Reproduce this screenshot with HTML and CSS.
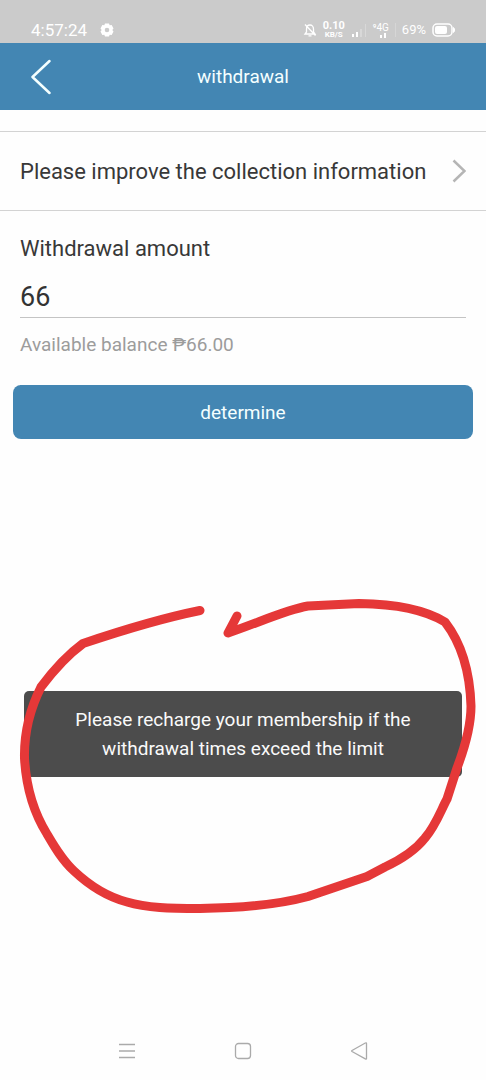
FILE: index.html
```html
<!DOCTYPE html>
<html lang="en">
<head>
<meta charset="utf-8">
<meta name="viewport" content="width=device-width, initial-scale=1">
<title>withdrawal</title>
<link rel="stylesheet" href="styles.css">
</head>
<body>
<div class="screen">
  <div class="status">
    <div class="status-left">
      <span class="clock">4:57:24</span>
      <svg class="gear" width="14" height="14" viewBox="0 0 14 14" aria-hidden="true"><path fill="currentColor" fill-rule="evenodd" d="M5 0.5h4l.7 1.8 2-.2 1.8 3.4L12.300 7l1.200 1.500-1.800 3.400-2-.2-.7 1.800H5l-.7-1.800-2 .2L.5 8.500 1.700 7 .5 5.500l1.800-3.400 2 .2zM7 4.700a2.300 2.300 0 1 0 0 4.600 2.300 2.300 0 0 0 0-4.600z"/></svg>
    </div>
    <div class="status-right">
      <svg width="14" height="16" viewBox="0 0 14 16" fill="none" stroke="currentColor" stroke-width="1.300" aria-hidden="true"><path d="M2 12h10l-1.500-2V7C10.500 4.500 9 3 7 3S3.500 4.500 3.500 7v3zM5.500 13.800h3M2 2.500l10.500 11"/></svg>
      <span class="rate"><b>0.10</b><b class="unit">KB/S</b></span>
      <svg class="signal" width="16" height="16" viewBox="0 0 16 16" aria-hidden="true"><path fill="currentColor" d="M1 12h2v3H1zM5 10h2v5H5z"/><path fill="currentColor" opacity=".25" d="M9 7h2v8H9zM14 2h1v13h-1z"/></svg>
      <span class="network"><span>⁹4G</span><svg width="10" height="5" viewBox="0 0 10 5" aria-hidden="true"><path fill="currentColor" d="M1 2h2v3H1zM5 0h2v5H5z"/></svg></span>
      <i class="divider"></i>
      <span class="percent">69%</span>
      <svg width="24" height="14" viewBox="0 0 24 14" aria-hidden="true"><rect x="1" y="1" width="19" height="12" rx="4" fill="none" stroke="currentColor" stroke-width="1.500"/><rect x="3" y="3" width="12" height="8" rx="2" fill="currentColor"/><path d="M21.500 4.500c1.500 1 1.500 4 0 5z" fill="currentColor" stroke="currentColor"/></svg>
    </div>
  </div>

  <header class="header">
    <button class="back" type="button" aria-label="Back">
      <svg width="20" height="36" viewBox="0 0 20 36" fill="none" stroke="currentColor" stroke-width="2.500" stroke-linecap="round" stroke-linejoin="round" aria-hidden="true"><path d="M18.500 2 1.500 18l17 16"/></svg>
    </button>
    <h1 class="title">withdrawal</h1>
  </header>

  <main class="content">
    <a class="info-row" href="#">
      <span>Please improve the collection information</span>
      <svg width="14" height="24" viewBox="0 0 14 24" fill="none" stroke="currentColor" stroke-width="2.500" aria-hidden="true"><path d="M1.500 1.500 12.500 12l-11 10.500"/></svg>
    </a>
    <form class="form">
      <div class="field">
        <label class="label" for="amount">Withdrawal amount</label>
        <input class="amount" id="amount" type="text" inputmode="decimal" value="66">
        <p class="balance">Available balance ₱66.00</p>
      </div>
      <button class="submit" type="button">determine</button>
    </form>
  </main>

  <nav class="nav" aria-label="System">
    <button class="nav-button" type="button" aria-label="Recent apps"><svg width="18" height="18" viewBox="0 0 18 18" fill="none" stroke="currentColor" stroke-width="1.300" aria-hidden="true"><path d="M1 2.500h16M1 9h16M1 15.500h16"/></svg></button>
    <button class="nav-button" type="button" aria-label="Home"><svg width="18" height="18" viewBox="0 0 18 18" fill="none" stroke="currentColor" stroke-width="1.300" aria-hidden="true"><rect x="1.500" y="1.500" width="15" height="15" rx="3"/></svg></button>
    <button class="nav-button" type="button" aria-label="Back"><svg width="18" height="18" viewBox="0 0 18 18" fill="none" stroke="currentColor" stroke-width="1.300" stroke-linejoin="round" aria-hidden="true"><path d="M16.500 1.500v15q0 1-1.200.4L2 9.500q-.8-.5 0-1L15.300 1q1.200-.5 1.200.5z"/></svg></button>
  </nav>

  <div class="toast" role="status">Please recharge your membership if the withdrawal times exceed the limit</div>
  <svg class="ring" viewBox="0 0 486 1080" fill="none" stroke="currentColor" stroke-width="9" stroke-linecap="round" stroke-linejoin="round" aria-hidden="true"><path d="M200 610.500C163 618 123 630 83 643.500C66 656 53 671 41 687C30 709 24 733 24.500 758C26 786 34 813 47 834C54 846 62 860 74 871C91 887 108 897 127 902C147 908 170 908.500 200 908.500C242 908 277 905 308 896.500L367 876.500L385 867C400 860 414 852 425 838C436 825 441 810 447 799L457 768C465 747 471 727 471 706C470 673 462 644 445 622C427 611 397 604 359 603.500L308 606C285 610 258 623 228 633L237 616"/></svg>
</div>
</body>
</html>
```

FILE: styles.css
```css
* {
  box-sizing: border-box;
}

body {
  margin: 0;
  background: #fefefe;
  color: #383838;
  font-family: Roboto, "Noto Sans", sans-serif;
}

button {
  padding: 0;
  border: 0;
  background: none;
  color: inherit;
  font: inherit;
}

svg {
  display: block;
  flex: none;
}

.screen {
  position: relative;
  display: flex;
  flex-direction: column;
  min-height: 100vh;
}

.status {
  display: flex;
  justify-content: space-between;
  align-items: center;
  height: 43px;
  padding: 16px 30px 0 31px;
  background: #cbcbcb;
  color: #fff;
}

.status-left,
.status-right {
  display: flex;
  align-items: center;
}

.status-left {
  gap: 13px;
}

.status-right {
  gap: 6px;
}

.clock {
  font-size: 17px;
}

.rate,
.network {
  display: flex;
  flex-direction: column;
  align-items: center;
  font-size: 11px;
  line-height: 11px;
}

.unit {
  font-size: 8px;
  line-height: 8px;
}

.network {
  align-items: flex-end;
  font-size: 10px;
}

.divider {
  width: 1px;
  height: 14px;
  background: #d6d6d6;
}

.percent {
  font-size: 13px;
}

.header {
  display: grid;
  grid-template-columns: 60px 1fr 60px;
  align-items: center;
  height: 67px;
  background: #4386b3;
  color: #f4ffff;
}

.back {
  display: flex;
  justify-content: flex-end;
  padding: 0 9px;
}

.title {
  margin: 0;
  font-size: 19px;
  font-weight: 400;
  text-align: center;
}

.content {
  padding-top: 21px;
}

.info-row {
  display: flex;
  justify-content: space-between;
  align-items: center;
  height: 80px;
  padding: 0 20px;
  border-top: 1px solid #d3d3d3;
  border-bottom: 1px solid #d3d3d3;
  color: inherit;
  font-size: 22px;
  text-decoration: none;
}

.info-row svg {
  color: #b5b5b5;
}

.field {
  padding: 24px 20px 0;
}

.label {
  display: block;
  font-size: 22px;
  line-height: 28px;
}

.amount {
  display: block;
  width: 100%;
  height: 55px;
  padding: 14px 0 0;
  border: 0;
  border-bottom: 1px solid #c4c4c4;
  border-radius: 0;
  outline: 0;
  background: none;
  color: #333;
  font: 27px Roboto, sans-serif;
}

.balance {
  margin: 14px 0 27px;
  color: #9c9c9c;
  font-size: 19px;
  line-height: 26px;
}

.submit {
  display: block;
  width: calc(100% - 26px);
  height: 54px;
  margin: 0 auto;
  border-radius: 8px;
  background: #4386b3;
  color: #f4ffff;
  font-size: 19px;
}

.nav {
  display: flex;
  justify-content: space-around;
  margin-top: auto;
  padding: 0 69px 20px;
  color: #aaa;
}

.toast {
  position: absolute;
  top: 64%;
  right: 24px;
  left: 24px;
  padding: 14px 40px;
  border-radius: 5px;
  background: #4c4c4c;
  color: #fafafa;
  font-size: 19px;
  line-height: 29px;
  text-align: center;
}

.ring {
  position: absolute;
  top: 0;
  left: 0;
  width: 100%;
  height: 100%;
  color: #e53838;
  pointer-events: none;
}
```
